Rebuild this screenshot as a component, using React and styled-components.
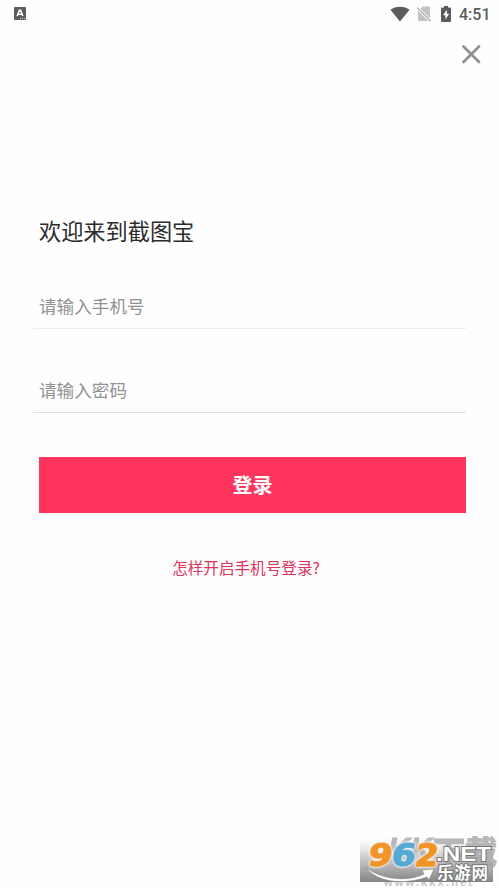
import React from "react";
import styled, { createGlobalStyle } from "styled-components";

const GlobalStyle = createGlobalStyle`
  * {
    box-sizing: border-box;
  }

  body {
    margin: 0;
    background: #fefefe;
    font-family: "Noto Sans CJK SC", sans-serif;
  }
`;

const Screen = styled.div`
  position: relative;
  display: flex;
  flex-direction: column;
  height: 888px;
  overflow: hidden;
`;

const StatusBar = styled.header`
  display: flex;
  align-items: center;
  justify-content: space-between;
  height: 27px;
  padding: 0 9px 0 14px;
`;

const StatusIcons = styled.div`
  display: flex;
  align-items: center;
`;

const Icon = styled.svg`
  display: block;
  flex: none;
  margin-right: ${({ $gap }) => $gap || 0}px;
`;

const Clock = styled.span`
  width: 31px;
  padding-top: 1px;
  color: #5c5c5c;
  font: 500 16px/27px Roboto, sans-serif;
  white-space: nowrap;
`;

const TopBar = styled.div`
  display: flex;
  justify-content: flex-end;
  padding: 18px 18px 0 0;
`;

const CloseButton = styled.button`
  padding: 0;
  border: none;
  background: none;
`;

const Content = styled.main`
  display: flex;
  flex-direction: column;
  padding: 150px 33px 0;
`;

const Title = styled.h1`
  margin: 0 0 41px 6px;
  color: #2c2c2c;
  font-size: 22.2px;
  font-weight: 400;
  line-height: 32px;
`;

const StyledInput = styled.input`
  height: 42px;
  margin-bottom: 42px;
  padding: 0 6px 5px;
  border: none;
  border-bottom: 1px solid ${({ $line }) => $line};
  background: transparent;
  font-family: inherit;
  font-size: 17.6px;
  outline: none;

  &::placeholder {
    color: #929292;
    opacity: 1;
  }
`;

const LoginButton = styled.button`
  height: 56px;
  margin: 2px 0 0 6px;
  padding: 0;
  border: none;
  background: #ff355e;
  color: #fff;
  font-family: inherit;
  font-size: 20px;
  font-weight: 700;
  line-height: 56px;
`;

const HelpLink = styled.a`
  align-self: center;
  margin: 42px 7px 0 0;
  color: #e0355c;
  font-size: 15.6px;
  line-height: 24px;
`;

const Watermark = styled.svg`
  position: absolute;
  right: 0;
  bottom: 0;
`;

const Digits = styled.g`
  font: 700 31px "DejaVu Sans", sans-serif;
  filter: drop-shadow(0 0 0.8px #fff) drop-shadow(0 0 0.8px #fff);
`;

const KeyboardIcon = () => (
  <Icon width="12" height="13" viewBox="0 0 12 13">
    <rect width="12" height="13" rx="1" fill="#5d5d5d" />
    <path d="M3.2 9 5.4 3.2h1.2L8.8 9M4.2 7.2h3.6" fill="none" stroke="#fff" strokeWidth="1.6" />
    <path d="M6 11.5h5" stroke="#ddd" strokeDasharray="1 1" />
  </Icon>
);

const WifiIcon = () => (
  <Icon width="20" height="16" viewBox="0 0 20 16" $gap={7}>
    <path d="M.4 3.8C5.6-.4 14.4-.4 19.6 3.8L10 15.6Z" fill="#5c5c5c" />
  </Icon>
);

const NoSimIcon = () => (
  <Icon width="14" height="16" viewBox="0 0 14 16" $gap={9}>
    <path d="M5.6.6H12q1 0 1 1v11L3.4 2.8ZM1 4.6 11.2 15H2q-1 0-1-1Z" fill="#c3c3c3" />
    <path d="M.2 1.6 13.6 15.2" stroke="#b8b8b8" strokeWidth="1.4" />
  </Icon>
);

const BatteryIcon = () => (
  <Icon width="12" height="16" viewBox="0 0 12 16" $gap={7}>
    <path d="M4 0h4v1.5h2q1 0 1 1V15q0 1-1 1H2q-1 0-1-1V2.5q0-1 1-1h2Z" fill="#5c5c5c" />
    <path d="M6.9 3.8 3.1 9.3h2.3v4.2L9.2 7.8H6.9Z" fill="#fff" />
  </Icon>
);

const CloseIcon = () => (
  <Icon width="19" height="19" viewBox="0 0 19 19">
    <path d="M1.5 1.5 17 17M17 1.5 1.5 17" stroke="#919191" strokeWidth="2.7" strokeLinecap="round" />
  </Icon>
);

const SiteWatermark = () => (
  <Watermark width="149" height="63" viewBox="350 825 149 63">
    <defs>
      <linearGradient id="plate" x1="0" y1="0" x2="0" y2="1">
        <stop offset="0" stopColor="#fafafa" stopOpacity="0.3" />
        <stop offset="0.4" stopColor="#d0d0d0" />
        <stop offset="1" stopColor="#858585" />
      </linearGradient>
    </defs>
    <text
      x="384"
      y="886"
      fill="#c4c4c4"
      fontFamily="Liberation Sans, sans-serif"
      fontSize="11"
      fontWeight="700"
      textLength="88"
    >
      www.kkx.net
    </text>
    <rect x="360" y="838" width="133" height="44" fill="url(#plate)" />
    <g fill="#a8a8a8" stroke="#a8a8a8" opacity="0.8" fontWeight="900">
      <text
        x="388"
        y="861"
        fontFamily="Liberation Sans, sans-serif"
        fontSize="33"
        fontStyle="italic"
        textLength="44"
        lengthAdjust="spacingAndGlyphs"
      >
        KK
      </text>
      <text
        x="433"
        y="864"
        fontFamily="Noto Sans CJK SC, sans-serif"
        fontSize="32"
        textLength="64"
        lengthAdjust="spacingAndGlyphs"
      >
        下载
      </text>
    </g>
    <path
      d="M366 867c14 13 43 15 58 7l-2-4 12-1-5 11-2-3c-22 8-51 6-61-10Z"
      fill="#fff"
      stroke="#777"
      strokeWidth="0.5"
    />
    <Digits transform="translate(367 866) skewX(-8)" strokeWidth="1.4">
      <text fill="#f09427" stroke="#f09427" textLength="24" lengthAdjust="spacingAndGlyphs">
        9
      </text>
      <text x="23.5" fill="#56a8d5" stroke="#56a8d5" textLength="24" lengthAdjust="spacingAndGlyphs">
        6
      </text>
      <text x="47" fill="#f09427" stroke="#f09427" textLength="23" lengthAdjust="spacingAndGlyphs">
        2
      </text>
    </Digits>
    <g fill="#fff" stroke="#777" strokeWidth="1.8" paintOrder="stroke" fontWeight="700">
      <text
        x="436"
        y="861"
        fontFamily="Liberation Sans, sans-serif"
        fontSize="21"
        textLength="55"
        lengthAdjust="spacingAndGlyphs"
      >
        .NET
      </text>
      <text x="437" y="879" fontFamily="Noto Sans CJK SC, sans-serif" fontSize="16.5" textLength="51">
        乐游网
      </text>
    </g>
  </Watermark>
);

const App = () => {
  return (
    <Screen>
      <GlobalStyle />
      <StatusBar>
        <KeyboardIcon />
        <StatusIcons>
          <WifiIcon />
          <NoSimIcon />
          <BatteryIcon />
          <Clock>4:51</Clock>
        </StatusIcons>
      </StatusBar>
      <TopBar>
        <CloseButton type="button" aria-label="关闭">
          <CloseIcon />
        </CloseButton>
      </TopBar>
      <Content>
        <Title>欢迎来到截图宝</Title>
        <StyledInput type="tel" placeholder="请输入手机号" $line="#ededed" />
        <StyledInput type="password" placeholder="请输入密码" $line="#dedede" />
        <LoginButton type="button">登录</LoginButton>
        <HelpLink>怎样开启手机号登录?</HelpLink>
      </Content>
      <SiteWatermark />
    </Screen>
  );
};

export default App;
